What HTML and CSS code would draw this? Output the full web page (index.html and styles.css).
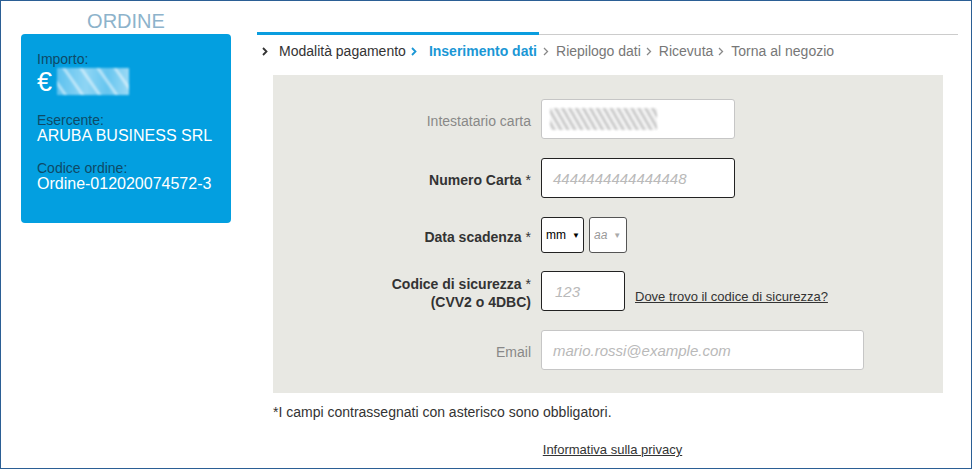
FILE: index.html
```html
<!DOCTYPE html>
<html lang="it">
<head>
<meta charset="utf-8">
<title>Ordine - Inserimento dati</title>
<link rel="stylesheet" href="styles.css">
</head>
<body>
<div class="frame">
  <aside class="side">
    <h1 class="side-title">ORDINE</h1>
    <div class="card">
      <div class="card-block">
        <div class="card-label">Importo:</div>
        <div class="card-amount"><span class="euro">€</span><span class="blur-amount"></span></div>
      </div>
      <div class="card-block">
        <div class="card-label">Esercente:</div>
        <div class="card-value">ARUBA BUSINESS SRL</div>
      </div>
      <div class="card-block">
        <div class="card-label">Codice ordine:</div>
        <div class="card-value">Ordine-012020074572-3</div>
      </div>
    </div>
  </aside>
  <main class="main">
    <div class="track"><div class="track-fill"></div></div>
    <nav class="steps">
      <span class="step step-done"><svg class="chev" viewBox="0 0 6 9" width="6" height="9"><polyline points="1,1 4.5,4.5 1,8" fill="none" stroke="currentColor" stroke-width="1.8"/></svg>Modalità pagamento</span>
      <span class="step step-active"><svg class="chev" viewBox="0 0 6 9" width="6" height="9"><polyline points="1,1 4.5,4.5 1,8" fill="none" stroke="currentColor" stroke-width="1.8"/></svg>Inserimento dati</span>
      <span class="step"><svg class="chev" viewBox="0 0 6 9" width="6" height="9"><polyline points="1,1 4.5,4.5 1,8" fill="none" stroke="currentColor" stroke-width="1.3"/></svg>Riepilogo dati</span>
      <span class="step"><svg class="chev" viewBox="0 0 6 9" width="6" height="9"><polyline points="1,1 4.5,4.5 1,8" fill="none" stroke="currentColor" stroke-width="1.3"/></svg>Ricevuta</span>
      <span class="step"><svg class="chev" viewBox="0 0 6 9" width="6" height="9"><polyline points="1,1 4.5,4.5 1,8" fill="none" stroke="currentColor" stroke-width="1.3"/></svg>Torna al negozio</span>
    </nav>
    <form class="form-box">
      <div class="row">
        <label class="lbl lbl-light">Intestatario carta</label>
        <div class="input input-soft input-name"><span class="blur-name"></span></div>
      </div>
      <div class="row">
        <label class="lbl">Numero Carta <span class="ast">*</span></label>
        <div class="input input-strong input-name"><span class="ph">4444444444444448</span></div>
      </div>
      <div class="row row-date">
        <label class="lbl">Data scadenza <span class="ast">*</span></label>
        <div class="selects">
          <div class="sel sel-mm"><span>mm</span><span class="arrow">▼</span></div>
          <div class="sel sel-aa"><span>aa</span><span class="arrow">▼</span></div>
        </div>
      </div>
      <div class="row">
        <label class="lbl">Codice di sicurezza <span class="ast">*</span><br>(CVV2 o 4DBC)</label>
        <div class="input input-strong input-cvv"><span class="ph">123</span></div>
        <a class="help" href="#">Dove trovo il codice di sicurezza?</a>
      </div>
      <div class="row row-last">
        <label class="lbl lbl-light">Email</label>
        <div class="input input-soft input-email"><span class="ph">mario.rossi@example.com</span></div>
      </div>
    </form>
    <p class="note">*I campi contrassegnati con asterisco sono obbligatori.</p>
    <p class="privacy"><a href="#">Informativa sulla privacy</a></p>
  </main>
</div>
</body>
</html>
```
FILE: styles.css
```css
html, body {
  margin: 0;
  padding: 0;
  background: #ffffff;
}
body {
  font-family: "Liberation Sans", Arial, sans-serif;
  color: #333333;
}
.frame {
  width: 972px;
  height: 469px;
  box-sizing: border-box;
  border: 1px solid #2b5f95;
  display: flex;
  overflow: hidden;
}
.side {
  width: 256px;
  flex: none;
  padding-left: 20px;
  box-sizing: border-box;
}
.side-title {
  margin: 0;
  width: 210px;
  text-align: center;
  font-size: 20px;
  font-weight: normal;
  line-height: 24px;
  padding-top: 8px;
  color: #8db3cb;
}
.card {
  margin-top: 1px;
  width: 210px;
  height: 189px;
  box-sizing: border-box;
  background: #039fe0;
  border-radius: 4px;
  padding: 17px 0 0 16px;
}
.card-block + .card-block {
  margin-top: 16px;
}
.card-label {
  font-size: 14px;
  line-height: 16px;
  color: #0e4a67;
}
.card-value {
  font-size: 16px;
  line-height: 16px;
  color: #ffffff;
}
.card-amount {
  display: flex;
  align-items: center;
  height: 29px;
  color: #ffffff;
}
.euro {
  font-size: 27px;
  line-height: 28px;
  width: 20px;
}
.blur-amount {
  display: inline-block;
  width: 72px;
  height: 27px;
  background:
    repeating-linear-gradient(55deg, rgba(255,255,255,0.0) 0 5px, rgba(255,255,255,0.5) 6px 8px, rgba(255,255,255,0.0) 9px 14px),
    linear-gradient(90deg, #5cc1ef, #8fd5f4 40%, #66c5ef 70%, #9cdaf5);
  filter: blur(1px);
}
.main {
  width: 701px;
  flex: none;
  padding-top: 31px;
}
.track {
  height: 3px;
  background: linear-gradient(to bottom, transparent 2px, #cccccc 2px);
}
.track-fill {
  width: 282px;
  height: 3px;
  background: #0a9ddf;
}
.steps {
  margin-top: 6px;
  padding-left: 5px;
  height: 20px;
  display: flex;
  align-items: center;
  font-size: 14px;
  color: #777777;
  white-space: nowrap;
}
.step {
  display: inline-flex;
  align-items: center;
  margin-right: 5px;
}
.chev {
  margin-right: 7px;
  flex: none;
  color: #888888;
}
.step:first-child .chev {
  margin-right: 11px;
}
.step-done, .step-done .chev {
  color: #333333;
}
.step-active {
  color: #1b97d5;
  font-weight: bold;
  margin-right: 6px;
}
.step-active .chev {
  color: #1b97d5;
  margin-right: 12px;
}
.form-box {
  margin: 14px 0 0 16px;
  width: 670px;
  height: 318px;
  box-sizing: border-box;
  background: #e8e8e3;
  padding-top: 24px;
  display: flex;
  flex-direction: column;
}
.row {
  display: flex;
  align-items: center;
  margin-bottom: 19px;
}
.row-date {
  margin-bottom: 18px;
}
.row-last {
  margin-bottom: 0;
}
.lbl {
  width: 268px;
  flex: none;
  box-sizing: border-box;
  padding-right: 10px;
  padding-top: 3px;
  text-align: right;
  font-size: 14px;
  line-height: 18px;
  font-weight: bold;
  color: #333333;
}
.lbl-light {
  font-weight: normal;
  color: #888888;
}
.ast {
  font-weight: normal;
}
.input {
  height: 40px;
  box-sizing: border-box;
  background: #ffffff;
  border-radius: 3px;
  display: flex;
  align-items: center;
  padding-left: 11px;
  font-size: 15px;
}
.input-soft {
  border: 1px solid #c6c6c6;
}
.input-strong {
  border: 1px solid #222222;
}
.input-name {
  width: 194px;
}
.input-cvv {
  width: 84px;
  padding-left: 13px;
}
.input-email {
  width: 323px;
}
.ph {
  color: #b9b9b9;
  font-style: italic;
}
.blur-name {
  display: block;
  width: 107px;
  height: 22px;
  margin-left: -3px;
  background: repeating-linear-gradient(60deg, #f6f6f6 0 2px, #b8b8b8 3px 4px, #e2e2e2 5px 6px);
  filter: blur(0.8px);
  opacity: 0.85;
}
.selects {
  display: flex;
  gap: 5px;
}
.sel {
  height: 36px;
  box-sizing: border-box;
  border: 1px solid #222222;
  border-radius: 3px;
  background: #ffffff;
  display: flex;
  align-items: center;
  padding-left: 4px;
  font-size: 12px;
}
.sel-mm {
  width: 43px;
  color: #000000;
}
.sel-aa {
  width: 38px;
  color: #999999;
  font-style: italic;
  border-color: #555555;
}
.arrow {
  font-size: 8px;
  font-style: normal;
  margin-left: 6px;
}
.sel-aa .arrow {
  color: #aaaaaa;
}
.help {
  margin-left: 10px;
  margin-top: 10px;
  font-size: 13px;
  color: #333333;
  text-decoration: underline;
}
.note {
  margin: 11px 0 0 16px;
  font-size: 14px;
  line-height: 16px;
  color: #333333;
}
.privacy {
  margin: 22px 0 0 0;
  padding-left: 10px;
  text-align: center;
  font-size: 13px;
  line-height: 16px;
}
.privacy a {
  color: #333333;
  text-decoration: underline;
}
```
